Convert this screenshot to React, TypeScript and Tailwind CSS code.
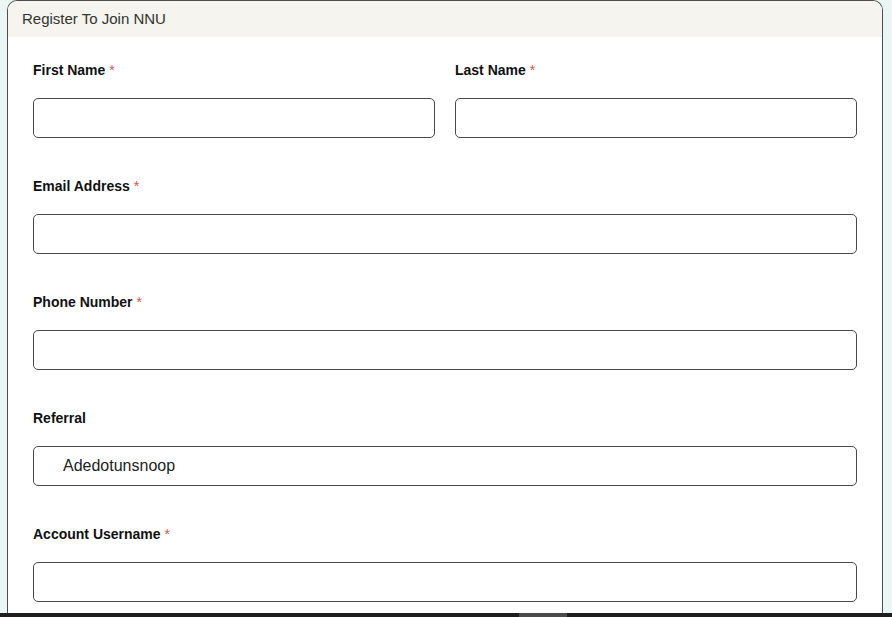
import React from 'react';

const fields = [
  { label: 'Email Address', required: true },
  { label: 'Phone Number', required: true },
  { label: 'Referral', required: false, value: 'Adedotunsnoop' },
  { label: 'Account Username', required: true },
];

const Label = ({ text, required }: { text: string; required?: boolean }) => (
  <label className="block text-[14px] font-bold leading-4 text-[#111] mb-[20px]">
    {text}
    {required && <span className="ml-1 font-normal text-[#d9534f]">*</span>}
  </label>
);

const Input = ({ value }: { value?: string }) => (
  <input
    type="text"
    defaultValue={value}
    className="block w-full h-10 rounded-[5px] border border-[#4a4a4a] bg-white pl-[29px] text-[16px] text-[#222] outline-none"
  />
);

export default function App() {
  return (
    <div className="h-[617px] overflow-hidden flex flex-col bg-[#e9f6f3] font-['Liberation_Sans',Arial,sans-serif]">
      <div className="flex-1 overflow-hidden pl-[7px] pr-[9px]">
        <div className="h-full rounded-t-[10px] border-x border-t border-[#4d4d4d] bg-white overflow-hidden">
          <div className="h-9 bg-[#f5f4ee] pl-[14px] flex items-center text-[15px] text-[#333]">
            Register To Join NNU
          </div>
          <div className="px-[25px] pt-[25px]">
            <div className="grid grid-cols-2 gap-5 mb-10">
              <div>
                <Label text="First Name" required />
                <Input />
              </div>
              <div>
                <Label text="Last Name" required />
                <Input />
              </div>
            </div>
            {fields.map((f) => (
              <div key={f.label} className="mb-10">
                <Label text={f.label} required={f.required} />
                <Input value={f.value} />
              </div>
            ))}
          </div>
        </div>
      </div>
      <div className="h-1 bg-[#1e1e1e] flex">
        <div className="ml-[519px] w-[48px] bg-[#4b4b4b]" />
      </div>
    </div>
  );
}
